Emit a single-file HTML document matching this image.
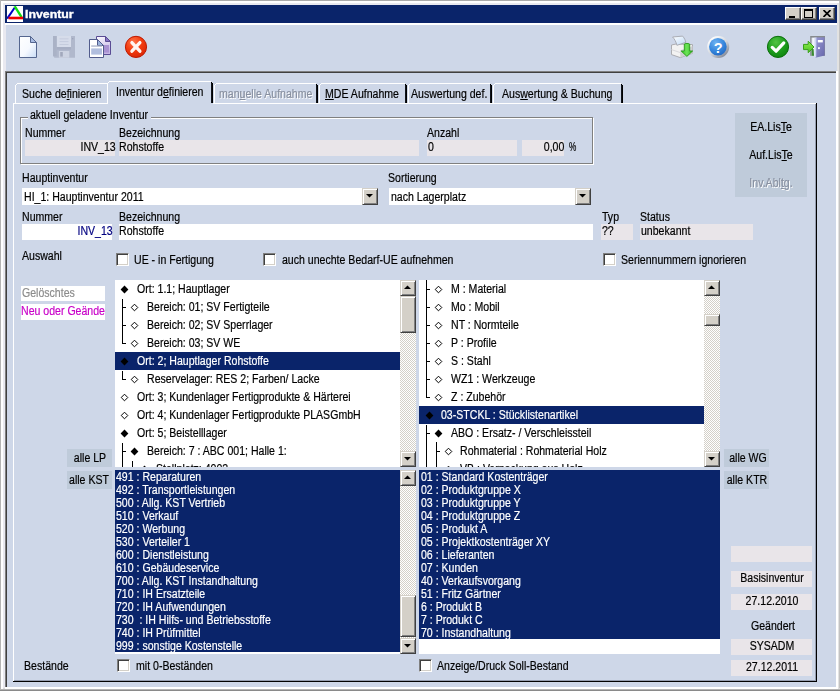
<!DOCTYPE html>
<html lang="de"><head><meta charset="utf-8"><title>Inventur</title>
<style>
html,body{margin:0;padding:0}
body{width:840px;height:691px;overflow:hidden;position:relative;background:#CED7E8;font-family:"Liberation Sans",sans-serif;font-size:12.5px;color:#000}
body div,body span,body svg{position:absolute}
.t{display:block;white-space:nowrap;line-height:14px;transform:scaleX(0.845);-webkit-text-stroke:0.2px currentColor}
.t u{text-decoration:underline;text-underline-offset:1px}
.dis{color:#8890A0;text-shadow:1px 1px 0 #fff}
.cb{width:16px;height:13px;background:#D4D0C8;box-sizing:border-box;border:1px solid;border-color:#fff #404040 #404040 #fff;box-shadow:inset -1px -1px 0 #808080}
.sb{background:#D4D0C8;box-sizing:border-box;border:1px solid;border-color:#D4D0C8 #404040 #404040 #D4D0C8;box-shadow:inset 1px 1px 0 #fff, inset -1px -1px 0 #808080}
.trk{background:repeating-conic-gradient(#FFFFFF 0 25%, #D4D0C8 0 50%) 0 0/2px 2px}
.ck{width:13px;height:13px;background:#fff;box-sizing:border-box;border:1px solid;border-color:#808080 #fff #fff #808080;box-shadow:inset 1px 1px 0 #404040, inset -1px -1px 0 #D4D0C8}
</style></head>
<body>
<div style="left:0px;top:0px;width:840px;height:25px;background:#E9E9F0;"></div>
<div style="left:0px;top:0px;width:6px;height:691px;background:#E9E9F0;"></div>
<div style="left:837px;top:0px;width:3px;height:691px;background:#E2E2E2;"></div>
<div style="left:839px;top:0px;width:1px;height:691px;background:#C2C2C2;"></div>
<div style="left:0px;top:688px;width:840px;height:3px;background:#DCDCDC;"></div>
<div style="left:0px;top:0px;width:840px;height:1px;background:#ABABAB;"></div>
<div style="left:0px;top:0px;width:1px;height:691px;background:#B4B4B4;"></div>
<div style="left:1px;top:1px;width:838px;height:2px;background:#FFFFFF;"></div>
<div style="left:1px;top:1px;width:2px;height:688px;background:#FFFFFF;"></div>
<div style="left:0px;top:690px;width:840px;height:1px;background:#8A8A8A;"></div>
<div style="left:1px;top:689px;width:839px;height:1px;background:#B4B4B4;"></div>
<div style="left:5px;top:23px;width:832px;height:2px;background:#FFFFFF;"></div>
<div style="left:5px;top:5px;width:832px;height:18px;background:#0A246A;"></div>
<svg style="left:7px;top:6px" width="16" height="16" viewBox="0 0 16 16">
<rect width="16" height="16" fill="#fff"/>
<path d="M0.2 12.6 L7.6 1.8" stroke="#0000C8" stroke-width="2" fill="none"/>
<path d="M7.6 0.2 L14.6 11.2" stroke="#10E010" stroke-width="2.4" fill="none"/>
<path d="M1.5 12 H16" stroke="#F00000" stroke-width="2.6" fill="none"/>
</svg>
<span class="t" style="left:25px;top:7.6px;font-size:11px;font-weight:bold;color:#fff;-webkit-text-stroke:0.35px #fff;transform:scaleX(1.12);transform-origin:0 0;line-height:13px">Inventur</span>
<div class="cb" style="left:785px;top:7px"></div>
<div style="left:789px;top:16px;width:6px;height:2px;background:#000;"></div>
<div class="cb" style="left:801px;top:7px"></div>
<div style="left:804px;top:9px;width:9px;height:9px;box-sizing:border-box;border:1px solid #000;border-top-width:2px"></div>
<div class="cb" style="left:819px;top:7px"></div>
<svg style="left:823px;top:10px" width="8" height="7" viewBox="0 0 8 7"><path d="M0.5 0 L7.5 7 M7.5 0 L0.5 7" stroke="#000" stroke-width="1.7"/></svg>
<svg style="left:18px;top:35px" width="20" height="24" viewBox="0 0 20 24">
<defs><linearGradient id="gdoc" x1="0" y1="0" x2="1" y2="1"><stop offset="0" stop-color="#FFFFFF"/><stop offset=".55" stop-color="#F6F9FF"/><stop offset="1" stop-color="#C8DCF6"/></linearGradient></defs>
<path d="M1.5 1.5 H12.5 L18.5 7.5 V22.5 H1.5 Z" fill="url(#gdoc)" stroke="#55668F" stroke-width="1" stroke-linejoin="miter"/>
<path d="M12.5 1.5 V7.5 H18.5 Z" fill="#A9BCE2" stroke="#55668F" stroke-width="1"/>
</svg>
<svg style="left:53px;top:36px" width="22" height="22" viewBox="0 0 22 22">
<path d="M0 0 H22 V21.7 H1.6 L0 20.1 Z" fill="#B0B8CC"/>
<rect x="0" y="0" width="3.6" height="20" fill="#AAB2C6"/>
<rect x="3.9" y="0" width="14.1" height="11" fill="#D6DCEA"/>
<rect x="6.5" y="2.4" width="9" height=".9" fill="#C3CADC"/><rect x="6.5" y="5.2" width="9" height=".9" fill="#C3CADC"/><rect x="6.5" y="8" width="9" height=".9" fill="#C3CADC"/>
<rect x="3.9" y="11" width="14.1" height="2.6" fill="#A7AFC4"/>
<rect x="5.9" y="15" width="10.4" height="6.7" fill="#CDD3E2"/>
<rect x="7.2" y="16" width="2.6" height="4.6" fill="#A2A8BC"/>
<rect x="19" y="2" width="1.3" height="1.3" fill="#9CA4BA"/>
</svg>
<svg style="left:88px;top:35px" width="25" height="24" viewBox="0 0 25 24">
<defs><linearGradient id="gcp1" x1="0" y1="0" x2="0.3" y2="1"><stop offset="0" stop-color="#FBFAFF"/><stop offset="1" stop-color="#C4B4E4"/></linearGradient></defs>
<path d="M8.5 1.5 H17.5 L22.5 6.5 V19.5 H8.5 Z" fill="url(#gcp1)" stroke="#5A4C94"/>
<path d="M17.5 1.5 V6.5 H22.5 Z" fill="#8672C4" stroke="#5A4C94"/>
<rect x="15.6" y="10" width="5.4" height="7.6" fill="#A992D2"/>
<path d="M1.5 4.5 H9.5 L15.5 10.5 V22.5 H1.5 Z" fill="#FFFFFF" stroke="#525C8C"/>
<path d="M9.5 4.5 V10.5 H15.5 Z" fill="#9CB4DC" stroke="#525C8C"/>
<rect x="3.2" y="10.4" width="10.8" height="1.3" fill="#A9B1C8"/>
<rect x="3.2" y="13.4" width="10.8" height="6.2" fill="#B1BEDE"/>
</svg>
<svg style="left:124px;top:35px" width="24" height="24" viewBox="0 0 24 24">
<defs><radialGradient id="grx" cx=".38" cy=".28" r=".8"><stop offset="0" stop-color="#FF7448"/><stop offset=".5" stop-color="#F23C10"/><stop offset="1" stop-color="#D82404"/></radialGradient></defs>
<circle cx="12" cy="11.9" r="10.6" fill="url(#grx)" stroke="#BE1A02" stroke-width="1"/>
<path d="M7.9 7.6 L15.9 16.2 M15.9 7.6 L7.9 16.2" stroke="#FFF6F2" stroke-width="3.3" stroke-linecap="round"/>
</svg>
<svg style="left:670px;top:35px" width="25" height="24" viewBox="0 0 25 24">
<defs><linearGradient id="gpp" x1="0" y1="0" x2="1" y2="1"><stop offset="0" stop-color="#FFFFFF"/><stop offset="1" stop-color="#BCD8F6"/></linearGradient>
<linearGradient id="gar" x1="0" y1="0" x2="1" y2="0"><stop offset="0" stop-color="#38C828"/><stop offset=".5" stop-color="#6CE458"/><stop offset="1" stop-color="#2CB41C"/></linearGradient></defs>
<path d="M1.5 10 L6 9 L22.5 9.6 L22.5 18.3 L10.3 22.6 L1.5 19.6 Z" fill="#F2F2F2" stroke="#A6A6AA" stroke-width=".9"/>
<path d="M10.3 15.2 L22.5 11 L22.5 18.3 L10.3 22.6 Z" fill="#CFCFD2"/>
<path d="M1.5 14.6 L10.3 17.6" stroke="#D8D8DC" stroke-width="1" fill="none"/>
<path d="M2.6 2 L12.6 1.1 C14.6 3.4 15.4 5.4 15.8 7.4 L6.9 10.3 C6.1 7 4.6 4 2.6 2 Z" fill="url(#gpp)" stroke="#A4A6AE" stroke-width=".9"/>
<path d="M14.3 9.2 C14.3 8.2 19.7 8.2 19.7 9.2 V16 H22.6 L16.9 21.4 L11.2 16 H14.3 Z" fill="url(#gar)" stroke="#279A1A" stroke-width=".9"/>
</svg>
<svg style="left:706px;top:35px" width="24" height="24" viewBox="0 0 24 24">
<defs><linearGradient id="ghr" x1="0.15" y1="0.1" x2=".85" y2=".95"><stop offset="0" stop-color="#FFFFFF"/><stop offset=".5" stop-color="#D4D8DE"/><stop offset="1" stop-color="#7C8290"/></linearGradient>
<radialGradient id="ghb" cx=".38" cy=".28" r=".85"><stop offset="0" stop-color="#6EB2F2"/><stop offset=".55" stop-color="#3686DC"/><stop offset="1" stop-color="#1E62BE"/></radialGradient></defs>
<circle cx="12.2" cy="12" r="11" fill="url(#ghr)"/>
<circle cx="11.9" cy="11.7" r="8.8" fill="url(#ghb)"/>
<text x="12.2" y="17.6" text-anchor="middle" font-family="Liberation Sans, sans-serif" font-weight="bold" font-size="14.5" fill="#FFFFFF">?</text>
</svg>
<svg style="left:766px;top:35px" width="24" height="24" viewBox="0 0 24 24">
<defs><radialGradient id="ggc" cx=".4" cy=".28" r=".85"><stop offset="0" stop-color="#54C444"/><stop offset=".5" stop-color="#1E9E1E"/><stop offset="1" stop-color="#0A7E0A"/></radialGradient></defs>
<circle cx="12" cy="11.9" r="10.6" fill="url(#ggc)" stroke="#0B6E0B" stroke-width="1"/>
<path d="M6.2 12.4 L10.1 16.2 L17.8 7.9" stroke="#FFFFFF" stroke-width="3.2" fill="none" stroke-linecap="round" stroke-linejoin="round"/>
</svg>
<svg style="left:802px;top:35px" width="25" height="24" viewBox="0 0 25 24">
<defs><linearGradient id="gdr" x1="0" y1="0" x2="1" y2="1"><stop offset="0" stop-color="#9C9CD6"/><stop offset="1" stop-color="#6666AA"/></linearGradient>
<linearGradient id="gdl" x1="0" y1="0" x2="1" y2="0"><stop offset="0" stop-color="#FFFFFF"/><stop offset="1" stop-color="#B8C4EC"/></linearGradient>
<linearGradient id="gaw" x1="0" y1="0" x2="0" y2="1"><stop offset="0" stop-color="#90EC50"/><stop offset="1" stop-color="#4CC420"/></linearGradient></defs>
<rect x="8.2" y="1" width="14.8" height="19.8" fill="#868A8E"/>
<rect x="9.6" y="2.6" width="5" height="18.2" fill="#E8ECF4"/>
<rect x="9.6" y="14" width="4" height="6.8" fill="#3C8A34"/>
<path d="M14.2 2.4 L22.6 2.2 L22.6 20.4 L12.4 23 L12.6 3 Z" fill="url(#gdr)"/>
<path d="M11 3 L14.6 2.5 L14.2 22.4 L12.2 23 Z" fill="url(#gdl)"/>
<rect x="15.8" y="5" width="5" height="2.4" fill="#FFFFFF"/>
<rect x="16" y="12.2" width="1.9" height="1.9" fill="#F4F4FF"/>
<path d="M1.5 9.4 H6.2 V6.2 L12 12 L6.2 17.7 V14.6 H1.5 Z" fill="url(#gaw)" stroke="#38A018" stroke-width="1"/>
</svg>
<div style="left:5px;top:71px;width:832px;height:1px;background:#808080;"></div>
<div style="left:5px;top:71px;width:1px;height:617px;background:#808080;"></div>
<div style="left:6px;top:72px;width:830px;height:1px;background:#404040;"></div>
<div style="left:6px;top:72px;width:1px;height:615px;background:#404040;"></div>
<div style="left:836px;top:71px;width:2px;height:617px;background:#FFFFFF;"></div>
<div style="left:5px;top:687px;width:833px;height:2px;background:#FFFFFF;"></div>
<div style="left:13px;top:103px;width:804px;height:1px;background:#FFFFFF;"></div>
<div style="left:13px;top:103px;width:1px;height:578px;background:#FFFFFF;"></div>
<div style="left:816px;top:103px;width:1px;height:579px;background:#000000;"></div>
<div style="left:13px;top:681px;width:804px;height:1px;background:#000000;"></div>
<div style="left:815px;top:104px;width:1px;height:577px;background:#969EB0;"></div>
<div style="left:14px;top:680px;width:802px;height:1px;background:#969EB0;"></div>
<div style="left:15px;top:85px;width:1px;height:18px;background:#FFFFFF;"></div>
<div style="left:16px;top:84px;width:1px;height:1px;background:#FFFFFF;"></div>
<div style="left:17px;top:83px;width:91px;height:1px;background:#FFFFFF;"></div>
<div style="left:108px;top:84px;width:1px;height:1px;background:#000;"></div>
<div style="left:109px;top:85px;width:1px;height:18px;background:#000;"></div>
<div style="left:108px;top:85px;width:1px;height:18px;background:#10141C;"></div>
<div style="left:214px;top:85px;width:1px;height:18px;background:#FFFFFF;"></div>
<div style="left:215px;top:84px;width:1px;height:1px;background:#FFFFFF;"></div>
<div style="left:216px;top:83px;width:100px;height:1px;background:#FFFFFF;"></div>
<div style="left:316px;top:84px;width:1px;height:1px;background:#000;"></div>
<div style="left:317px;top:85px;width:1px;height:18px;background:#000;"></div>
<div style="left:316px;top:85px;width:1px;height:18px;background:#10141C;"></div>
<div style="left:319px;top:85px;width:1px;height:18px;background:#FFFFFF;"></div>
<div style="left:320px;top:84px;width:1px;height:1px;background:#FFFFFF;"></div>
<div style="left:321px;top:83px;width:84px;height:1px;background:#FFFFFF;"></div>
<div style="left:405px;top:84px;width:1px;height:1px;background:#000;"></div>
<div style="left:406px;top:85px;width:1px;height:18px;background:#000;"></div>
<div style="left:405px;top:85px;width:1px;height:18px;background:#10141C;"></div>
<div style="left:408px;top:85px;width:1px;height:18px;background:#FFFFFF;"></div>
<div style="left:409px;top:84px;width:1px;height:1px;background:#FFFFFF;"></div>
<div style="left:410px;top:83px;width:80px;height:1px;background:#FFFFFF;"></div>
<div style="left:490px;top:84px;width:1px;height:1px;background:#000;"></div>
<div style="left:491px;top:85px;width:1px;height:18px;background:#000;"></div>
<div style="left:490px;top:85px;width:1px;height:18px;background:#10141C;"></div>
<div style="left:493px;top:85px;width:1px;height:18px;background:#FFFFFF;"></div>
<div style="left:494px;top:84px;width:1px;height:1px;background:#FFFFFF;"></div>
<div style="left:495px;top:83px;width:126px;height:1px;background:#FFFFFF;"></div>
<div style="left:621px;top:84px;width:1px;height:1px;background:#000;"></div>
<div style="left:622px;top:85px;width:1px;height:18px;background:#000;"></div>
<div style="left:621px;top:85px;width:1px;height:18px;background:#10141C;"></div>
<div style="left:107px;top:81px;width:106px;height:23px;background:#CED7E8;"></div>
<div style="left:107px;top:83px;width:1px;height:21px;background:#FFFFFF;"></div>
<div style="left:108px;top:82px;width:1px;height:1px;background:#FFFFFF;"></div>
<div style="left:109px;top:81px;width:102px;height:1px;background:#FFFFFF;"></div>
<div style="left:211px;top:82px;width:1px;height:1px;background:#000;"></div>
<div style="left:212px;top:83px;width:1px;height:20px;background:#000;"></div>
<div style="left:211px;top:83px;width:1px;height:20px;background:#10141C;"></div>
<span class="t " style="top:87px;left:21.5px;transform-origin:0 0;">Suche de<u>f</u>inieren</span>
<span class="t " style="top:85px;left:115.5px;transform-origin:0 0;">Inventur d<u>e</u>finieren</span>
<span class="t dis" style="top:87px;left:219px;transform-origin:0 0;">man<u>u</u>elle Aufnahme</span>
<span class="t " style="top:87px;left:325px;transform-origin:0 0;"><u>M</u>DE Aufnahme</span>
<span class="t " style="top:87px;left:411px;transform-origin:0 0;">Auswertung def.</span>
<span class="t " style="top:87px;left:502px;transform-origin:0 0;">Aus<u>w</u>ertung &amp; Buchung</span>
<div style="left:20px;top:117px;width:573px;height:47px;box-sizing:border-box;border:1px solid #808080;box-shadow:1px 1px 0 #fff, inset 1px 1px 0 #fff"></div>
<div style="left:28px;top:110px;width:123px;height:14px;background:#CED7E8;"></div>
<span class="t " style="top:108px;left:30px;transform-origin:0 0;">aktuell geladene Inventur</span>
<span class="t " style="top:126px;left:25px;transform-origin:0 0;">Nummer</span>
<span class="t " style="top:126px;left:118.5px;transform-origin:0 0;">Bezeichnung</span>
<span class="t " style="top:126px;left:427px;transform-origin:0 0;">Anzahl</span>
<div style="left:25px;top:140px;width:90px;height:16px;background:#E9E5E9;"></div>
<div style="left:119px;top:140px;width:300px;height:16px;background:#E9E5E9;"></div>
<div style="left:427px;top:140px;width:90px;height:16px;background:#E9E5E9;"></div>
<div style="left:522px;top:140px;width:42px;height:16px;background:#E9E5E9;"></div>
<span class="t " style="top:140px;right:724.7px;transform-origin:100% 0;">INV_13</span>
<span class="t " style="top:140px;left:119.3px;transform-origin:0 0;">Rohstoffe</span>
<span class="t " style="top:140px;left:428px;transform-origin:0 0;">0</span>
<span class="t " style="top:140px;right:276px;transform-origin:100% 0;">0,00</span>
<span class="t " style="top:140px;left:569px;transform-origin:0 0;transform:scaleX(0.66);">%</span>
<div style="left:735px;top:113px;width:72px;height:84px;background:#BFCBDA;"></div>
<span class="t " style="top:120px;left:571px;width:400px;text-align:center;transform-origin:50% 0;">EA.Lis<u>T</u>e</span>
<span class="t " style="top:148px;left:571px;width:400px;text-align:center;transform-origin:50% 0;">Auf.Lis<u>T</u>e</span>
<span class="t dis" style="top:176px;left:571px;width:400px;text-align:center;transform-origin:50% 0;">Inv.Abl<u>t</u>g.</span>
<span class="t " style="top:171px;left:21.5px;transform-origin:0 0;">Hauptinventur</span>
<span class="t " style="top:171px;left:388px;transform-origin:0 0;">Sortierung</span>
<div style="left:22px;top:188px;width:340px;height:17px;background:#FFFFFF;"></div>
<div style="left:389px;top:188px;width:186px;height:17px;background:#FFFFFF;"></div>
<span class="t " style="top:190px;left:23.5px;transform-origin:0 0;">HI_1: Hauptinventur 2011</span>
<span class="t " style="top:190px;left:391px;transform-origin:0 0;">nach Lagerplatz</span>
<div class="sb" style="left:362px;top:188px;width:16px;height:17px"></div>
<svg style="left:366px;top:194px" width="7" height="4" viewBox="0 0 7 4"><path d="M0 0 H7 L3.5 3.5 Z" fill="#000"/></svg>
<div class="sb" style="left:575px;top:188px;width:16px;height:17px"></div>
<svg style="left:579px;top:194px" width="7" height="4" viewBox="0 0 7 4"><path d="M0 0 H7 L3.5 3.5 Z" fill="#000"/></svg>
<span class="t " style="top:210px;left:21.5px;transform-origin:0 0;">Nummer</span>
<span class="t " style="top:210px;left:118.5px;transform-origin:0 0;">Bezeichnung</span>
<span class="t " style="top:210px;left:601.5px;transform-origin:0 0;">Typ</span>
<span class="t " style="top:210px;left:639.5px;transform-origin:0 0;">Status</span>
<div style="left:22px;top:224px;width:90px;height:16px;background:#FFFFFF;"></div>
<div style="left:119px;top:224px;width:474px;height:16px;background:#FFFFFF;"></div>
<div style="left:601px;top:224px;width:32px;height:16px;background:#E9E5E9;"></div>
<div style="left:640px;top:224px;width:113px;height:16px;background:#E9E5E9;"></div>
<span class="t " style="top:224px;right:727.7px;transform-origin:100% 0;color:#000080;">INV_13</span>
<span class="t " style="top:224px;left:119.3px;transform-origin:0 0;">Rohstoffe</span>
<span class="t " style="top:224px;left:602px;transform-origin:0 0;">??</span>
<span class="t " style="top:224px;left:641px;transform-origin:0 0;">unbekannt</span>
<span class="t " style="top:249px;left:22px;transform-origin:0 0;">Auswahl</span>
<div class="ck" style="left:116px;top:253px"></div>
<div class="ck" style="left:263px;top:253px"></div>
<div class="ck" style="left:603px;top:253px"></div>
<span class="t " style="top:253px;left:134.3px;transform-origin:0 0;">UE - in Fertigung</span>
<span class="t " style="top:253px;left:281.7px;transform-origin:0 0;">auch unechte Bedarf-UE aufnehmen</span>
<span class="t " style="top:253px;left:620.7px;transform-origin:0 0;">Seriennummern ignorieren</span>
<div style="left:21px;top:286px;width:84px;height:15px;background:#FFFFFF;"></div>
<div style="left:21px;top:304px;width:84px;height:16px;background:#FFFFFF;"></div>
<span class="t " style="top:286px;left:22px;transform-origin:0 0;color:#8C8C8C;">Gelöschtes</span>
<div style="left:21px;top:304px;width:84px;height:16px;overflow:hidden">
<span class="t " style="top:0px;left:0.2px;transform-origin:0 0;color:#C800C8;">Neu oder Geändertes</span>
</div>
<div style="left:115px;top:280px;width:285px;height:187px;background:#fff;overflow:hidden">
<div style="left:0px;top:72px;width:285px;height:18px;background:#0A246A;"></div>
<svg style="left:5.0px;top:4.5px" width="9" height="9" viewBox="0 0 9 9"><path d="M4.5 0.6 L8.4 4.5 L4.5 8.4 L0.6 4.5 Z" fill="#000"/></svg>
<span class="t " style="top:2px;left:21.5px;transform-origin:0 0;color:#000;">Ort: 1.1; Hauptlager</span>
<svg style="left:15.0px;top:22.5px" width="9" height="9" viewBox="0 0 9 9"><path d="M4.5 1.2 L7.8 4.5 L4.5 7.8 L1.2 4.5 Z" fill="#fff" stroke="#000" stroke-width="1"/></svg>
<span class="t " style="top:20px;left:31.5px;transform-origin:0 0;color:#000;">Bereich: 01; SV Fertigteile</span>
<svg style="left:15.0px;top:40.5px" width="9" height="9" viewBox="0 0 9 9"><path d="M4.5 1.2 L7.8 4.5 L4.5 7.8 L1.2 4.5 Z" fill="#fff" stroke="#000" stroke-width="1"/></svg>
<span class="t " style="top:38px;left:31.5px;transform-origin:0 0;color:#000;">Bereich: 02; SV Sperrlager</span>
<svg style="left:15.0px;top:58.5px" width="9" height="9" viewBox="0 0 9 9"><path d="M4.5 1.2 L7.8 4.5 L4.5 7.8 L1.2 4.5 Z" fill="#fff" stroke="#000" stroke-width="1"/></svg>
<span class="t " style="top:56px;left:31.5px;transform-origin:0 0;color:#000;">Bereich: 03; SV WE</span>
<svg style="left:5.0px;top:76.5px" width="9" height="9" viewBox="0 0 9 9"><path d="M4.5 0.6 L8.4 4.5 L4.5 8.4 L0.6 4.5 Z" fill="#000"/></svg>
<span class="t " style="top:74px;left:21.5px;transform-origin:0 0;color:#fff;">Ort: 2; Hauptlager Rohstoffe</span>
<svg style="left:15.0px;top:94.5px" width="9" height="9" viewBox="0 0 9 9"><path d="M4.5 1.2 L7.8 4.5 L4.5 7.8 L1.2 4.5 Z" fill="#fff" stroke="#000" stroke-width="1"/></svg>
<span class="t " style="top:92px;left:31.5px;transform-origin:0 0;color:#000;">Reservelager: RES 2; Farben/ Lacke</span>
<svg style="left:5.0px;top:112.5px" width="9" height="9" viewBox="0 0 9 9"><path d="M4.5 1.2 L7.8 4.5 L4.5 7.8 L1.2 4.5 Z" fill="#fff" stroke="#000" stroke-width="1"/></svg>
<span class="t " style="top:110px;left:21.5px;transform-origin:0 0;color:#000;">Ort: 3; Kundenlager Fertigprodukte &amp; Härterei</span>
<svg style="left:5.0px;top:130.5px" width="9" height="9" viewBox="0 0 9 9"><path d="M4.5 1.2 L7.8 4.5 L4.5 7.8 L1.2 4.5 Z" fill="#fff" stroke="#000" stroke-width="1"/></svg>
<span class="t " style="top:128px;left:21.5px;transform-origin:0 0;color:#000;">Ort: 4; Kundenlager Fertigprodukte PLASGmbH</span>
<svg style="left:5.0px;top:148.5px" width="9" height="9" viewBox="0 0 9 9"><path d="M4.5 0.6 L8.4 4.5 L4.5 8.4 L0.6 4.5 Z" fill="#000"/></svg>
<span class="t " style="top:146px;left:21.5px;transform-origin:0 0;color:#000;">Ort: 5; Beistelllager</span>
<svg style="left:15.0px;top:166.5px" width="9" height="9" viewBox="0 0 9 9"><path d="M4.5 0.6 L8.4 4.5 L4.5 8.4 L0.6 4.5 Z" fill="#000"/></svg>
<span class="t " style="top:164px;left:31.5px;transform-origin:0 0;color:#000;">Bereich: 7 : ABC 001; Halle 1:</span>
<svg style="left:25.0px;top:184.5px" width="9" height="9" viewBox="0 0 9 9"><path d="M4.5 0.6 L8.4 4.5 L4.5 8.4 L0.6 4.5 Z" fill="#000"/></svg>
<span class="t " style="top:182px;left:41px;transform-origin:0 0;color:#000;">Stellplatz: 4002</span>
<div style="left:7px;top:19px;width:1px;height:45px;background:#000;"></div>
<div style="left:7px;top:27px;width:4px;height:1px;background:#000;"></div>
<div style="left:7px;top:45px;width:4px;height:1px;background:#000;"></div>
<div style="left:7px;top:63px;width:4px;height:1px;background:#000;"></div>
<div style="left:7px;top:91px;width:1px;height:9px;background:#000;"></div>
<div style="left:7px;top:99px;width:4px;height:1px;background:#000;"></div>
<div style="left:7px;top:163px;width:1px;height:27px;background:#000;"></div>
<div style="left:7px;top:171px;width:4px;height:1px;background:#000;"></div>
<div style="left:17px;top:181px;width:1px;height:9px;background:#000;"></div>
</div>
<div class="trk" style="left:400px;top:280px;width:16px;height:187px"></div>
<div class="sb" style="left:400px;top:280px;width:16px;height:16px"></div>
<svg style="left:404px;top:285px" width="7" height="4" viewBox="0 0 7 4"><path d="M0 4 H7 L3.5 0.4 Z" fill="#000"/></svg>
<div class="sb" style="left:400px;top:451px;width:16px;height:16px"></div>
<svg style="left:404px;top:457px" width="7" height="4" viewBox="0 0 7 4"><path d="M0 0 H7 L3.5 3.6 Z" fill="#000"/></svg>
<div class="sb" style="left:400px;top:296px;width:16px;height:37px"></div>
<div style="left:419px;top:280px;width:285px;height:187px;background:#fff;overflow:hidden">
<div style="left:0px;top:126px;width:285px;height:18px;background:#0A246A;"></div>
<svg style="left:15.0px;top:4.5px" width="9" height="9" viewBox="0 0 9 9"><path d="M4.5 1.2 L7.8 4.5 L4.5 7.8 L1.2 4.5 Z" fill="#fff" stroke="#000" stroke-width="1"/></svg>
<span class="t " style="top:2px;left:31.69999999999999px;transform-origin:0 0;color:#000;">M : Material</span>
<svg style="left:15.0px;top:22.5px" width="9" height="9" viewBox="0 0 9 9"><path d="M4.5 1.2 L7.8 4.5 L4.5 7.8 L1.2 4.5 Z" fill="#fff" stroke="#000" stroke-width="1"/></svg>
<span class="t " style="top:20px;left:31.69999999999999px;transform-origin:0 0;color:#000;">Mo : Mobil</span>
<svg style="left:15.0px;top:40.5px" width="9" height="9" viewBox="0 0 9 9"><path d="M4.5 1.2 L7.8 4.5 L4.5 7.8 L1.2 4.5 Z" fill="#fff" stroke="#000" stroke-width="1"/></svg>
<span class="t " style="top:38px;left:31.69999999999999px;transform-origin:0 0;color:#000;">NT : Normteile</span>
<svg style="left:15.0px;top:58.5px" width="9" height="9" viewBox="0 0 9 9"><path d="M4.5 1.2 L7.8 4.5 L4.5 7.8 L1.2 4.5 Z" fill="#fff" stroke="#000" stroke-width="1"/></svg>
<span class="t " style="top:56px;left:31.69999999999999px;transform-origin:0 0;color:#000;">P : Profile</span>
<svg style="left:15.0px;top:76.5px" width="9" height="9" viewBox="0 0 9 9"><path d="M4.5 1.2 L7.8 4.5 L4.5 7.8 L1.2 4.5 Z" fill="#fff" stroke="#000" stroke-width="1"/></svg>
<span class="t " style="top:74px;left:31.69999999999999px;transform-origin:0 0;color:#000;">S : Stahl</span>
<svg style="left:15.0px;top:94.5px" width="9" height="9" viewBox="0 0 9 9"><path d="M4.5 1.2 L7.8 4.5 L4.5 7.8 L1.2 4.5 Z" fill="#fff" stroke="#000" stroke-width="1"/></svg>
<span class="t " style="top:92px;left:31.69999999999999px;transform-origin:0 0;color:#000;">WZ1 : Werkzeuge</span>
<svg style="left:15.0px;top:112.5px" width="9" height="9" viewBox="0 0 9 9"><path d="M4.5 1.2 L7.8 4.5 L4.5 7.8 L1.2 4.5 Z" fill="#fff" stroke="#000" stroke-width="1"/></svg>
<span class="t " style="top:110px;left:31.69999999999999px;transform-origin:0 0;color:#000;">Z : Zubehör</span>
<svg style="left:5.5px;top:130.5px" width="9" height="9" viewBox="0 0 9 9"><path d="M4.5 0.6 L8.4 4.5 L4.5 8.4 L0.6 4.5 Z" fill="#000"/></svg>
<span class="t " style="top:128px;left:22.0px;transform-origin:0 0;color:#fff;">03-STCKL : Stücklistenartikel</span>
<svg style="left:15.0px;top:148.5px" width="9" height="9" viewBox="0 0 9 9"><path d="M4.5 0.6 L8.4 4.5 L4.5 8.4 L0.6 4.5 Z" fill="#000"/></svg>
<span class="t " style="top:146px;left:31.69999999999999px;transform-origin:0 0;color:#000;">ABO : Ersatz- / Verschleissteil</span>
<svg style="left:24.5px;top:166.5px" width="9" height="9" viewBox="0 0 9 9"><path d="M4.5 1.2 L7.8 4.5 L4.5 7.8 L1.2 4.5 Z" fill="#fff" stroke="#000" stroke-width="1"/></svg>
<span class="t " style="top:164px;left:41.39999999999998px;transform-origin:0 0;color:#000;">Rohmaterial : Rohmaterial Holz</span>
<svg style="left:24.5px;top:184.5px" width="9" height="9" viewBox="0 0 9 9"><path d="M4.5 1.2 L7.8 4.5 L4.5 7.8 L1.2 4.5 Z" fill="#fff" stroke="#000" stroke-width="1"/></svg>
<span class="t " style="top:182px;left:41.39999999999998px;transform-origin:0 0;color:#000;">VB : Verpackung aus Holz</span>
<div style="left:7px;top:0px;width:1px;height:118px;background:#000;"></div>
<div style="left:7px;top:9px;width:4px;height:1px;background:#000;"></div>
<div style="left:7px;top:27px;width:4px;height:1px;background:#000;"></div>
<div style="left:7px;top:45px;width:4px;height:1px;background:#000;"></div>
<div style="left:7px;top:63px;width:4px;height:1px;background:#000;"></div>
<div style="left:7px;top:81px;width:4px;height:1px;background:#000;"></div>
<div style="left:7px;top:99px;width:4px;height:1px;background:#000;"></div>
<div style="left:7px;top:117px;width:4px;height:1px;background:#000;"></div>
<div style="left:7px;top:145px;width:1px;height:45px;background:#000;"></div>
<div style="left:7px;top:153px;width:4px;height:1px;background:#000;"></div>
<div style="left:17px;top:162px;width:1px;height:28px;background:#000;"></div>
<div style="left:17px;top:171px;width:4px;height:1px;background:#000;"></div>
<div style="left:17px;top:189px;width:4px;height:1px;background:#000;"></div>
</div>
<div class="trk" style="left:704px;top:280px;width:16px;height:187px"></div>
<div class="sb" style="left:704px;top:280px;width:16px;height:16px"></div>
<svg style="left:708px;top:285px" width="7" height="4" viewBox="0 0 7 4"><path d="M0 4 H7 L3.5 0.4 Z" fill="#000"/></svg>
<div class="sb" style="left:704px;top:451px;width:16px;height:16px"></div>
<svg style="left:708px;top:457px" width="7" height="4" viewBox="0 0 7 4"><path d="M0 0 H7 L3.5 3.6 Z" fill="#000"/></svg>
<div class="sb" style="left:704px;top:314px;width:16px;height:12px"></div>
<div style="left:115px;top:470px;width:285px;height:184px;background:#FFFFFF;"></div>
<div style="left:115px;top:470px;width:285px;height:182px;background:#0A246A;"></div>
<span class="t " style="top:470px;left:116px;transform-origin:0 0;color:#fff;white-space:pre;">491 : Reparaturen</span>
<span class="t " style="top:483px;left:116px;transform-origin:0 0;color:#fff;white-space:pre;">492 : Transportleistungen</span>
<span class="t " style="top:496px;left:116px;transform-origin:0 0;color:#fff;white-space:pre;">500 : Allg. KST Vertrieb</span>
<span class="t " style="top:509px;left:116px;transform-origin:0 0;color:#fff;white-space:pre;">510 : Verkauf</span>
<span class="t " style="top:522px;left:116px;transform-origin:0 0;color:#fff;white-space:pre;">520 : Werbung</span>
<span class="t " style="top:535px;left:116px;transform-origin:0 0;color:#fff;white-space:pre;">530 : Verteiler 1</span>
<span class="t " style="top:548px;left:116px;transform-origin:0 0;color:#fff;white-space:pre;">600 : Dienstleistung</span>
<span class="t " style="top:561px;left:116px;transform-origin:0 0;color:#fff;white-space:pre;">610 : Gebäudeservice</span>
<span class="t " style="top:574px;left:116px;transform-origin:0 0;color:#fff;white-space:pre;">700 : Allg. KST Instandhaltung</span>
<span class="t " style="top:587px;left:116px;transform-origin:0 0;color:#fff;white-space:pre;">710 : IH Ersatzteile</span>
<span class="t " style="top:600px;left:116px;transform-origin:0 0;color:#fff;white-space:pre;">720 : IH Aufwendungen</span>
<span class="t " style="top:613px;left:116px;transform-origin:0 0;color:#fff;white-space:pre;">730  : IH Hilfs- und Betriebsstoffe</span>
<span class="t " style="top:626px;left:116px;transform-origin:0 0;color:#fff;white-space:pre;">740 : IH Prüfmittel</span>
<span class="t " style="top:639px;left:116px;transform-origin:0 0;color:#fff;white-space:pre;">999 : sonstige Kostenstelle</span>
<div class="trk" style="left:400px;top:470px;width:16px;height:184px"></div>
<div class="sb" style="left:400px;top:470px;width:16px;height:16px"></div>
<svg style="left:404px;top:475px" width="7" height="4" viewBox="0 0 7 4"><path d="M0 4 H7 L3.5 0.4 Z" fill="#000"/></svg>
<div class="sb" style="left:400px;top:638px;width:16px;height:16px"></div>
<svg style="left:404px;top:644px" width="7" height="4" viewBox="0 0 7 4"><path d="M0 0 H7 L3.5 3.6 Z" fill="#000"/></svg>
<div class="sb" style="left:400px;top:595px;width:16px;height:42px"></div>
<div style="left:419px;top:470px;width:301px;height:184px;background:#FFFFFF;"></div>
<div style="left:419px;top:470px;width:301px;height:169px;background:#0A246A;"></div>
<span class="t " style="top:470px;left:420.5px;transform-origin:0 0;color:#fff;">01 : Standard Kostenträger</span>
<span class="t " style="top:483px;left:420.5px;transform-origin:0 0;color:#fff;">02 : Produktgruppe X</span>
<span class="t " style="top:496px;left:420.5px;transform-origin:0 0;color:#fff;">03 : Produktgruppe Y</span>
<span class="t " style="top:509px;left:420.5px;transform-origin:0 0;color:#fff;">04 : Produktgruppe Z</span>
<span class="t " style="top:522px;left:420.5px;transform-origin:0 0;color:#fff;">05 : Produkt A</span>
<span class="t " style="top:535px;left:420.5px;transform-origin:0 0;color:#fff;">05 : Projektkostenträger XY</span>
<span class="t " style="top:548px;left:420.5px;transform-origin:0 0;color:#fff;">06 : Lieferanten</span>
<span class="t " style="top:561px;left:420.5px;transform-origin:0 0;color:#fff;">07 : Kunden</span>
<span class="t " style="top:574px;left:420.5px;transform-origin:0 0;color:#fff;">40 : Verkaufsvorgang</span>
<span class="t " style="top:587px;left:420.5px;transform-origin:0 0;color:#fff;">51 : Fritz Gärtner</span>
<span class="t " style="top:600px;left:420.5px;transform-origin:0 0;color:#fff;">6 : Produkt B</span>
<span class="t " style="top:613px;left:420.5px;transform-origin:0 0;color:#fff;">7 : Produkt C</span>
<span class="t " style="top:626px;left:420.5px;transform-origin:0 0;color:#fff;">70 : Instandhaltung</span>
<div style="left:67px;top:449px;width:45px;height:18px;background:#BFCBDA;"></div>
<div style="left:67px;top:471px;width:45px;height:18px;background:#BFCBDA;"></div>
<div style="left:724px;top:449px;width:45px;height:18px;background:#BFCBDA;"></div>
<div style="left:724px;top:471px;width:45px;height:18px;background:#BFCBDA;"></div>
<span class="t " style="top:451px;left:-110.5px;width:400px;text-align:center;transform-origin:50% 0;">alle LP</span>
<span class="t " style="top:473px;left:-111px;width:400px;text-align:center;transform-origin:50% 0;">alle KST</span>
<span class="t " style="top:451px;left:548px;width:400px;text-align:center;transform-origin:50% 0;">alle WG</span>
<span class="t " style="top:473px;left:547px;width:400px;text-align:center;transform-origin:50% 0;">alle KTR</span>
<div style="left:731px;top:546px;width:81px;height:16px;background:#E9E5E9;"></div>
<div style="left:731px;top:571px;width:81px;height:16px;background:#E9E5E9;"></div>
<div style="left:731px;top:594px;width:81px;height:16px;background:#E9E5E9;"></div>
<div style="left:731px;top:639px;width:81px;height:16px;background:#E9E5E9;"></div>
<div style="left:731px;top:660px;width:81px;height:16px;background:#E9E5E9;"></div>
<span class="t " style="top:571px;left:571.5px;width:400px;text-align:center;transform-origin:50% 0;">Basisinventur</span>
<span class="t " style="top:594px;left:571.5px;width:400px;text-align:center;transform-origin:50% 0;">27.12.2010</span>
<span class="t " style="top:619px;left:572.5px;width:400px;text-align:center;transform-origin:50% 0;">Geändert</span>
<span class="t " style="top:639px;left:571.5px;width:400px;text-align:center;transform-origin:50% 0;">SYSADM</span>
<span class="t " style="top:660px;left:571.5px;width:400px;text-align:center;transform-origin:50% 0;">27.12.2011</span>
<span class="t " style="top:659px;left:24.2px;transform-origin:0 0;">Bestände</span>
<div class="ck" style="left:117px;top:659px"></div>
<div class="ck" style="left:419px;top:659px"></div>
<span class="t " style="top:659px;left:135.5px;transform-origin:0 0;">mit 0-Beständen</span>
<span class="t " style="top:659px;left:437px;transform-origin:0 0;">Anzeige/Druck Soll-Bestand</span>
</body></html>
